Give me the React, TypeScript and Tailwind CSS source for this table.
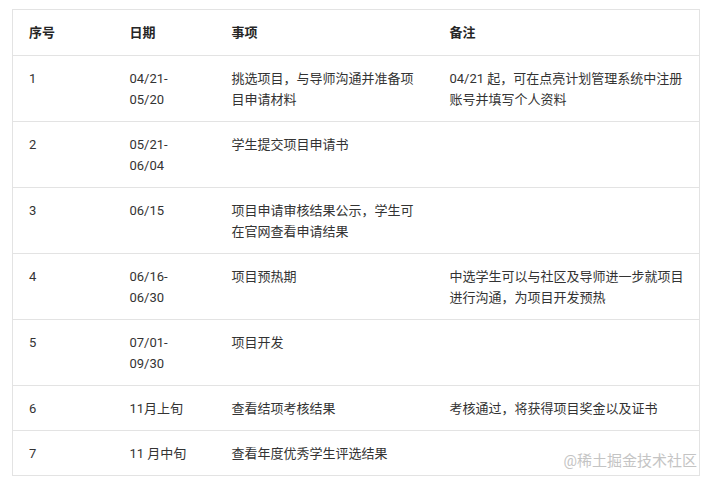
const rows = [
  { no: "1", date: ["04/21-", "05/20"], item: "挑选项目，与导师沟通并准备项目申请材料", note: "04/21 起，可在点亮计划管理系统中注册账号并填写个人资料" },
  { no: "2", date: ["05/21-", "06/04"], item: "学生提交项目申请书", note: "" },
  { no: "3", date: ["06/15"], item: "项目申请审核结果公示，学生可在官网查看申请结果", note: "" },
  { no: "4", date: ["06/16-", "06/30"], item: "项目预热期", note: "中选学生可以与社区及导师进一步就项目进行沟通，为项目开发预热" },
  { no: "5", date: ["07/01-", "09/30"], item: "项目开发", note: "" },
  { no: "6", date: ["11月上旬"], item: "查看结项考核结果", note: "考核通过，将获得项目奖金以及证书" },
  { no: "7", date: ["11 月中旬"], item: "查看年度优秀学生评选结果", note: "" },
];

const App = () => {
  return (
    <div
      className="relative w-[710px] h-[486px] bg-white pt-[9px] pl-[12px]"
      style={{ fontFamily: 'Roboto, "Noto Sans CJK SC", sans-serif' }}
    >
      <table className="table-fixed border-collapse border border-[#e3e3e3] w-[687px] text-[13px] leading-[21px] text-[#333]">
        <colgroup>
          <col className="w-[101px]" />
          <col className="w-[102px]" />
          <col className="w-[218px]" />
          <col className="w-[266px]" />
        </colgroup>
        <thead>
          <tr>
            {["序号", "日期", "事项", "备注"].map((h) => (
              <th
                key={h}
                className="border-y border-[#e3e3e3] pl-4 pr-3 py-3 text-left font-semibold text-[#262626]"
              >
                {h}
              </th>
            ))}
          </tr>
        </thead>
        <tbody>
          {rows.map((r) => (
            <tr key={r.no}>
              <td className="border-y border-[#e3e3e3] px-4 pt-3 pb-[11px] align-top">{r.no}</td>
              <td className="border-y border-[#e3e3e3] px-4 pt-3 pb-[11px] align-top">
                {r.date.map((d) => (
                  <div key={d}>{d}</div>
                ))}
              </td>
              <td className="border-y border-[#e3e3e3] px-4 pt-3 pb-[11px] align-top">{r.item}</td>
              <td className="border-y border-[#e3e3e3] pl-4 pr-3 pt-3 pb-[11px] align-top">{r.note}</td>
            </tr>
          ))}
        </tbody>
      </table>
      <div className="absolute right-[13px] top-[451px] text-[15px] leading-[20px] text-[#c4c4c4]">
        @稀土掘金技术社区
      </div>
    </div>
  );
};

export default App;
